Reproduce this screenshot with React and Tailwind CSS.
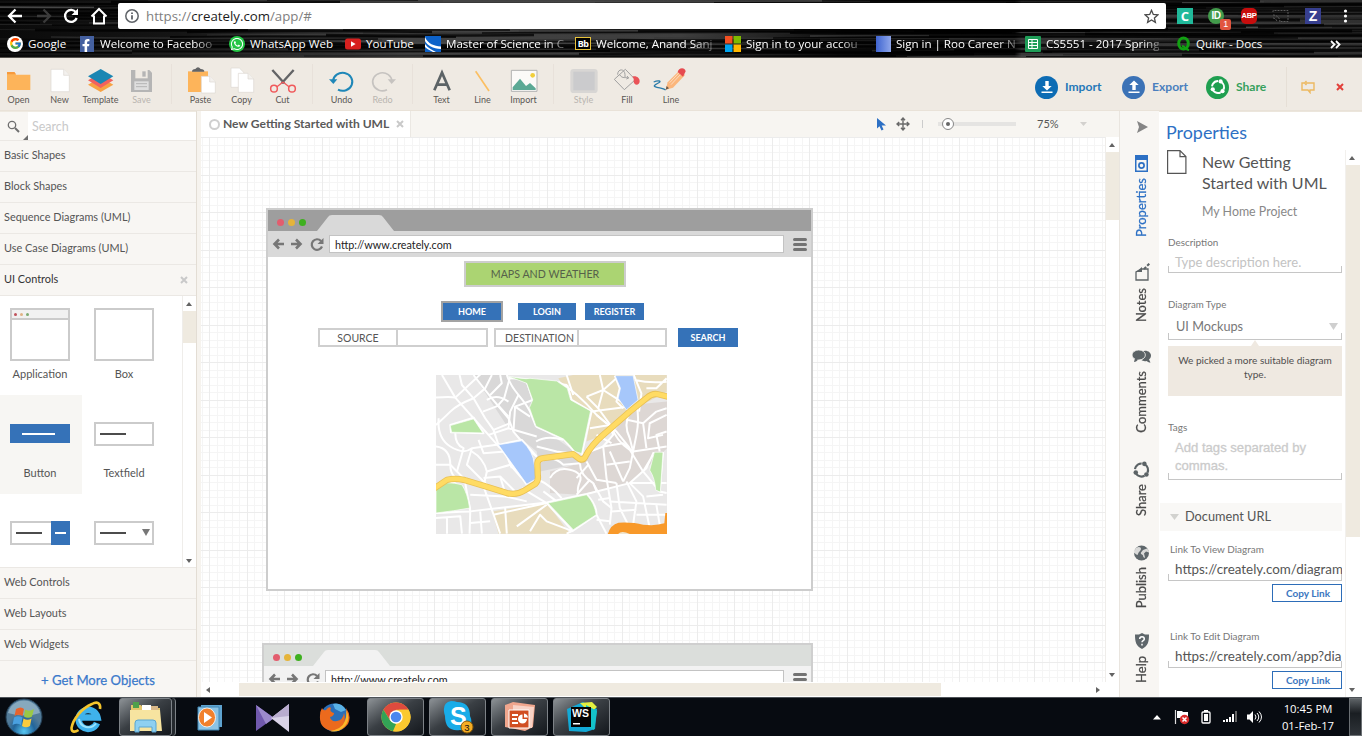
import React from "react";
import { FcGoogle } from "react-icons/fc";
import { FaFacebookF, FaWhatsapp } from "react-icons/fa";

/* ---------- Browser chrome ---------- */

const streaks = Array.from({ length: 90 }, (_, i) => {
  const a = (i * 7919) % 1362;
  const b = (i * 104729) % 58;
  const len = 140 + ((i * 613) % 400);
  const shade = 20 + ((i * 37) % 60);
  return { x: a - 160, y: b, len, h: 0.6 + ((i * 31) % 16) / 10, shade, tilt: ((i * 13) % 5) - 2 };
});

function Streaks() {
  return (
    <svg className="absolute inset-0 h-full w-full" viewBox="0 0 1362 58" preserveAspectRatio="none">
      <defs>
        <linearGradient id="st" x1="0" x2="1">
          <stop offset="0" stopColor="#0a0a0a" />
          <stop offset=".13" stopColor="#151515" />
          <stop offset=".3" stopColor="#424242" />
          <stop offset=".5" stopColor="#3e3e3e" />
          <stop offset=".62" stopColor="#0c0c0c" />
          <stop offset=".745" stopColor="#040404" />
          <stop offset=".75" stopColor="#383838" />
          <stop offset="1" stopColor="#303030" />
        </linearGradient>
      </defs>
      <rect width="1362" height="58" fill="url(#st)" />
      {streaks.map((s, i) => (
        <path
          key={i}
          d={`M${s.x} ${s.y} q${s.len / 2} ${s.tilt} ${s.len} 0`}
          stroke={`rgb(${s.shade},${s.shade},${s.shade})`}
          strokeWidth={s.h}
          fill="none"
          opacity={i % 3 ? 0.55 : 0.9}
        />
      ))}
      {streaks.map((s, i) => (
        <path key={i} d={`M${s.x + 60} ${(s.y + 23) % 58} q${s.len / 2} ${s.tilt} ${s.len} 0`} stroke="#000" strokeWidth={s.h + 0.8} fill="none" opacity=".75" />
      ))}
      <path d="M0 57.5H1362" stroke="#55524e" />
    </svg>
  );
}

const bookmarks = [
  { w: "w-[72px]", label: "Google", icon: <span className="flex size-4 items-center justify-center rounded-full bg-white"><FcGoogle size={13} /></span> },
  { w: "w-[150px]", label: "Welcome to Faceboo", fade: true, icon: <span className="flex h-4 w-[14px] items-end justify-end bg-[#4460a0] pr-[2px] text-white"><FaFacebookF size={13} /></span> },
  { w: "w-[116px]", label: "WhatsApp Web", icon: <span className="flex size-4 items-center justify-center rounded-full bg-[#25c546] text-white"><FaWhatsapp size={14} /></span> },
  { w: "w-[80px]", label: "YouTube", icon: <svg width="16" height="16"><rect y="2.5" width="16" height="11" rx="2.5" fill="#d7201f" /><path d="M6 5.3v5.4l4.6-2.7z" fill="#fff" /></svg> },
  { w: "w-[150px]", label: "Master of Science in C", fade: true, icon: <svg width="16" height="16"><rect width="16" height="16" fill="#0d62c9" /><path d="M0 1C3 8 9 10 16 10.500V13C8 13 2 9 0 5zM0 8c3 4 7 6 11 8H8C4 14 1 12 0 11z" fill="#fff" /></svg> },
  { w: "w-[150px]", label: "Welcome, Anand Sanj", fade: true, icon: <span className="flex h-[13px] w-4 items-center justify-center border border-[#e8c33a] bg-black font-['Noto_Sans'] text-[9px] font-bold leading-none tracking-[-0.5px] text-white">Bb</span> },
  { w: "w-[150px]", label: "Sign in to your accou", fade: true, icon: <svg width="16" height="16"><path fill="#f25022" d="M0 0h7.500v7.500H0z" /><path fill="#7fba00" d="M8.500 0H16v7.500H8.500z" /><path fill="#00a4ef" d="M0 8.500h7.500V16H0z" /><path fill="#ffb900" d="M8.500 8.500H16V16H8.500z" /></svg> },
  { w: "w-[150px]", label: "Sign in | Roo Career N", fade: true, icon: <span className="h-4 w-[15px] bg-linear-to-r from-[#3f63cf] to-[#8fa6ea]" /> },
  { w: "w-[150px]", label: "CS5551 - 2017 Spring", fade: true, icon: <svg width="16" height="16"><rect width="16" height="16" rx="1" fill="#1f9d58" /><path d="M3.500 3.500h9v9h-9zM3.500 6.500h9M3.500 9.500h9M7 3.500v9" stroke="#fff" fill="none" /></svg> },
  { w: "w-[110px]", label: "Quikr - Docs", icon: <svg width="16" height="16"><ellipse cx="8.500" cy="7.500" rx="4.800" ry="5.500" fill="none" stroke="#12a012" strokeWidth="3" /><path d="M7 10c3 0 4 4 7 4" fill="none" stroke="#12a012" strokeWidth="2.200" /></svg> },
];

function BrowserChrome() {
  return (
    <header className="relative h-[58px] shrink-0 overflow-hidden bg-black font-['Open_Sans','Noto_Sans',sans-serif] text-white">
      <Streaks />
      <div className="relative flex h-[30px] items-center pt-[2px]">
        <svg width="118" height="30" fill="none" stroke="#fff" strokeWidth="2.300">
          <path d="M22 15H9.500M15.500 8.500L9 15l6.500 6.500" />
          <path d="M37 15h12.500M43.500 8.500L50 15l-6.500 6.500" stroke="#3b3b3b" />
          <path d="M76 11.500A6 6 0 1 0 76.700 17" />
          <path d="M78 7.500v6.500h-6.500z" fill="#fff" stroke="none" />
          <path d="M91.500 15.500L99 8l7.500 7.500M94 14.500V22.500h10V14.500" strokeWidth="2" />
        </svg>
        <div className="flex h-[26px] w-[1048px] items-center rounded-[2px] bg-white pl-[7px] pr-[7px]">
          <svg width="14" height="14" fill="none" stroke="#5f6368" strokeWidth="1.500"><circle cx="7" cy="7" r="6.200" /><path d="M7 6.200v4.200M7 3.500v1.500" strokeWidth="1.800" /></svg>
          <span className="ml-[7px] flex-1 text-[13.25px] leading-5 text-[#808080]">https://<span className="text-[#1c1c1c]">creately.com</span>/app/#</span>
          <svg width="15" height="15" fill="none" stroke="#4a4a4a" strokeWidth="1.300"><path d="M7.500 1.300l1.800 4.200 4.500.4-3.400 3 1 4.400-3.900-2.300-3.900 2.300 1-4.400-3.400-3 4.500-.4z" /></svg>
        </div>
        <div className="flex items-center pl-[11px]">
          <span className="flex size-4 items-center justify-center bg-[#20b99a] text-[13px] font-bold leading-none">C</span>
          <span className="relative ml-[15px] flex size-4 items-center justify-center rounded-full bg-[#429b4b] font-['Liberation_Sans'] text-[10px] font-bold leading-none tracking-[-0.5px]">
            ID
            <span className="absolute left-3 top-[11px] flex h-[11px] w-[11px] items-center justify-center rounded-[2px] bg-[#e1553f] text-[9px] font-normal">1</span>
          </span>
          <span className="ml-[17px] flex size-4 items-center justify-center rounded-[5px] bg-[#c70d0d] font-['Liberation_Sans'] text-[7.500px] font-bold leading-none tracking-[-0.3px]">ABP</span>
          <svg className="ml-[15px]" width="17" height="16" fill="none" stroke="#5b5b5b"><path d="M1 4V2.500h15v11H9M1 7c4 0 7 3 7 7M1 10c2 0 4 2 4 4" strokeDasharray="2 1" /></svg>
          <span className="ml-[16px] flex size-4 items-center justify-center bg-[#373f8f] font-['Liberation_Sans'] text-[14px] font-bold leading-none">Z</span>
          <svg className="ml-[22px]" width="5" height="16" fill="#fff"><circle cx="2.500" cy="3" r="1.600" /><circle cx="2.500" cy="8" r="1.600" /><circle cx="2.500" cy="13" r="1.600" /></svg>
        </div>
      </div>
      <div className="relative flex h-[28px] items-center pl-[7px] text-[11.65px]">
        {bookmarks.map((b) => (
          <div key={b.label} className={`${b.w} flex shrink-0 items-center gap-[5px]`}>
            <span className="flex w-4 shrink-0 justify-center">{b.icon}</span>
            <span className={b.fade ? "whitespace-nowrap tracking-[-0.05px] [mask-image:linear-gradient(to_right,#000_84%,#0005)]" : "whitespace-nowrap"}>{b.label}</span>
          </div>
        ))}
        <svg className="ml-[45px]" width="11" height="9" fill="none" stroke="#fff" strokeWidth="1.800"><path d="M1 1l3.500 3.500L1 8M6 1l3.500 3.500L6 8" /></svg>
      </div>
    </header>
  );
}

/* ---------- Application toolbar ---------- */

function Tool({ label, w = "w-[41px]", muted, children }) {
  return (
    <div className={`${w} flex shrink-0 flex-col items-center`}>
      <svg width="40" height="31" viewBox="0 0 120 93">{children}</svg>
      <span className={`-mt-px text-[9px] leading-[11px] ${muted ? "text-[#b9b5b0]" : "text-[#5a5754]"}`}>{label}</span>
    </div>
  );
}

const Sep = () => <div className="h-10 w-[18px] shrink-0 border-r border-[#e8e1da] -translate-x-2" />;

function RoundAction({ label, bg, text, children, textW }) {
  return (
    <div className="flex items-center gap-[7px]">
      <span className={`flex size-[23px] items-center justify-center rounded-full ${bg}`}>{children}</span>
      <span className={`text-[12.1px] font-bold leading-4 ${text} ${textW}`}>{label}</span>
    </div>
  );
}

const recycle = (
  <>
    <circle cx="12" cy="12" r="8" fill="none" stroke="currentColor" strokeWidth="2.600" strokeDasharray="11.500 5.250" transform="rotate(-60 12 12)" />
    <circle cx="5" cy="15" r="2.800" fill="currentColor" />
    <circle cx="18" cy="17.500" r="2.800" fill="currentColor" />
    <circle cx="15.500" cy="4.500" r="2.800" fill="currentColor" />
  </>
);

function AppToolbar() {
  return (
    <div className="flex h-[53px] shrink-0 items-start border-b border-[#e9e2d8] bg-[#efeae3] pt-[6px]">
      <div className="-ml-[2px] flex">
        <Tool label="Open"><path d="M24 24h22l5 8h43v46H24z" fill="#fdb45a" /><path d="M24 24h22l5 7H24z" fill="#f79a3c" /></Tool>
        <Tool label="New"><path d="M33 16h38l17 18v49H33z" fill="#fff" stroke="#ddd8d2" strokeWidth="2" /><path d="M71 16v18h17" fill="#f3f1ee" stroke="#ddd8d2" strokeWidth="2" /></Tool>
        <Tool label="Template"><path d="M21 62l38-22 38 22-38 22z" fill="#f7a243" /><path d="M21 49l38-22 38 22-38 23z" fill="#f2615e" /><path d="M21 37l38-22 38 22-38 23z" fill="#1b86b3" /></Tool>
        <Tool label="Save" muted><path d="M27 18h55l8 8v58H27z" fill="#b5b5b5" /><path d="M40 18h37v25H40z" fill="#efeae3" /><path d="M61 22h10v16H61z" fill="#b5b5b5" /><path d="M37 52h43v26H37z" fill="#dedede" /><path d="M42 59h33M42 68h33" stroke="#b5b5b5" strokeWidth="3" /></Tool>
        <Sep />
        <Tool label="Paste"><path d="M21 22h60v62H21z" fill="#fdb45a" /><path d="M33 23q0-8 10-8 8-11 16 0 11 0 11 8z" fill="#636466" /><path d="M61 37h25l17 17v33H61z" fill="#fff" stroke="#ddd8d2" strokeWidth="2" /><path d="M86 37v17h17" fill="#f3f1ee" stroke="#ddd8d2" strokeWidth="2" /></Tool>
        <Tool label="Copy"><path d="M27 12h25l14 14v44H27z" fill="#fff" stroke="#ddd8d2" strokeWidth="2" /><path d="M49 28h29l17 17v40H49z" fill="#fff" stroke="#ddd8d2" strokeWidth="2" /><path d="M78 28v17h17" fill="#f3f1ee" stroke="#ddd8d2" strokeWidth="2" /></Tool>
        <Tool label="Cut"><path d="M28 18l36 40M92 18L56 58" stroke="#636466" strokeWidth="7" /><path d="M60 54L42 68M60 54l18 14" stroke="#f0595b" strokeWidth="4" /><circle cx="33" cy="74" r="10" fill="none" stroke="#f0595b" strokeWidth="4.500" /><circle cx="87" cy="74" r="10" fill="none" stroke="#f0595b" strokeWidth="4.500" /></Tool>
        <Sep />
        <Tool label="Undo"><path d="M33 52A29 27 0 1 1 48 77" fill="none" stroke="#1f87b8" strokeWidth="6" /><path d="M21 46h25L34 60z" fill="#1f87b8" /></Tool>
        <Tool label="Redo" muted><path d="M87 52A29 27 0 1 0 72 77" fill="none" stroke="#c6c3c0" strokeWidth="5" /><path d="M99 46H74l12 14z" fill="#c6c3c0" /></Tool>
        <Sep />
        <Tool label="Text"><path d="M37 79L60 26l23 53M45 62h30" fill="none" stroke="#5c6366" strokeWidth="8" /></Tool>
        <Tool label="Line"><path d="M38 22l40 59" stroke="#fbbf62" strokeWidth="5" /></Tool>
        <Tool label="Import"><path d="M22 19h77v63H22z" fill="#fbfaf8" stroke="#b1b1b1" strokeWidth="3" /><path d="M26 78V70l22-26 18 22 12-9 17 16v5z" fill="#5ba995" /><circle cx="86" cy="34" r="7" fill="#f1cf3b" /></Tool>
        <Sep />
        <Tool label="Style" w="w-[43px]" muted><rect x="19" y="15" width="82" height="72" rx="10" fill="#d8d6d4" /><rect x="28" y="23" width="64" height="56" fill="#cbcbcd" /></Tool>
        <Tool label="Fill" w="w-[44px]"><path d="M22 46l33-30 30 31-33 30z" fill="none" stroke="#a0a0a0" strokeWidth="3" /><path d="M32 32c0-20 22-18 22 0v8" fill="none" stroke="#a0a0a0" strokeWidth="3" /><path d="M38 32c8 14 20 6 26 10M60 36l5 6-7 3" fill="none" stroke="#a0a0a0" strokeWidth="3" /><path d="M76 38c12-4 22 4 22 14 0 14-18 14-18 0 0-6 2-8-4-14z" fill="#ea5358" /></Tool>
        <Tool label="Line" w="w-[44px]"><path d="M8 54c14-6 26-3 14 3s-18 10-4 13 20 3 26 8" fill="none" stroke="#2a7ba9" strokeWidth="4" /><path d="M44 77l6-22 36-36 16 14-36 38z" fill="#fbb67c" /><path d="M44 77l3-11 7 7z" fill="#6a5a4a" /><path d="M60 62l32-34M56 56l32-34" stroke="#fddcc0" strokeWidth="3" /><path d="M80 24c2-14 22-16 24-2l-8 16z" fill="#e64b50" /></Tool>
      </div>
      <div className="ml-[342px] flex h-[46px] shrink-0 items-center">
        <RoundAction label="Import" bg="bg-[#0d6cb4]" text="text-[#2578b8]" textW="w-[57px]">
          <svg width="16" height="16" fill="#fff"><path d="M6.300 2h3.400v5h3L8 11.500 3.300 7h3zM2.500 12.500h11V14h-11z" /></svg>
        </RoundAction>
        <RoundAction label="Export" bg="bg-[#3b72b6]" text="text-[#4a7fbe]" textW="w-[47px]">
          <svg width="16" height="16" fill="#fff"><path d="M6.300 11h3.400V6h3L8 1.500 3.300 6h3zM2.500 12.500h11V14h-11z" /></svg>
        </RoundAction>
        <div className="ml-[7px]">
          <RoundAction label="Share" bg="bg-[#1f9f50] text-white" text="text-[#35a05c]" textW="w-[50px]">
            <svg width="18" height="18" viewBox="0 0 24 24">{recycle}</svg>
          </RoundAction>
        </div>
        <div className="h-10 border-l border-[#e6dfd6]" />
        <svg className="ml-[13px]" width="16" height="14" fill="none" stroke="#edb961" strokeWidth="1.400"><path d="M4 3H2v7h6l2 2.500V10h4V3H6M6.500 1L4.500 3l2 2" /></svg>
        <svg className="ml-[20px]" width="8" height="8" stroke="#e2403a" strokeWidth="2"><path d="M1 1l6 6M7 1L1 7" /></svg>
      </div>
    </div>
  );
}

/* ---------- Object library ---------- */

const Row = ({ children, close }) => (
  <div className="flex h-[31px] shrink-0 items-center justify-between border-b border-[#ebe8e4] bg-[#f8f6f3] pb-[2px] pl-1 pr-2 text-[10.9px] text-[#555]">
    <span className={close ? "text-[#333]" : ""}>{children}</span>
    {close && <svg className="mt-[2px]" width="8" height="8" stroke="#c9c9c9" strokeWidth="2"><path d="M1 1l6 6M7 1L1 7" /></svg>}
  </div>
);

const Up = () => <svg width="7" height="4" fill="#636363"><path d="M0 4h6L3 0z" /></svg>;
const Down = () => <svg width="7" height="4" fill="#636363"><path d="M0 0h6L3 4z" /></svg>;

function Shape({ label, active, first, children }) {
  return (
    <div className={`flex h-[99px] flex-col items-center ${first ? "pr-[2px]" : ""} ${active ? "bg-[#f7f6f3]" : ""}`}>
      <div className="flex h-[77px] w-[60px] items-center">{children}</div>
      {label && <span className="-mt-[7px] text-[11px] leading-4 text-[#555]">{label}</span>}
    </div>
  );
}

function Library() {
  return (
    <aside className="flex w-[196px] shrink-0 flex-col font-['Lato',sans-serif]">
      <div className="flex h-[30px] shrink-0 border-b border-[#ebe8e4] border-t border-t-[#eee9e0] bg-white">
        <div className="flex w-7 items-center bg-[#f8f6f3] pl-[7px]">
          <svg width="21" height="28" fill="none" stroke="#6f6f6f"><circle cx="5" cy="13" r="3.700" strokeWidth="1.300" /><path d="M8 16l4 4" strokeWidth="2" /><path d="M21 23v5h-5z" fill="#6f6f6f" stroke="none" /></svg>
        </div>
        <span className="pl-1 pt-px text-[12.5px] leading-[28px] text-[#c9c9c9]">Search</span>
      </div>
      <Row>Basic Shapes</Row>
      <Row>Block Shapes</Row>
      <Row>Sequence Diagrams (UML)</Row>
      <Row>Use Case Diagrams (UML)</Row>
      <Row close>UI Controls</Row>
      <div className="flex h-[271px] shrink-0 overflow-hidden bg-white">
        <div className="grid w-[182px] grid-cols-[82px_84px] content-start">
          <Shape first label="Application">
            <div className="h-[53px] w-[60px] border-2 border-[#cbcbcb]">
              <div className="flex h-[10px] items-center gap-[3px] border-b-2 border-[#cbcbcb] bg-[#f1f1f1] pl-[2px]">
                <i className="size-[3px] rounded-full bg-[#c0525c]" /><i className="size-[3px] rounded-full bg-[#e0b285]" /><i className="size-[3px] rounded-full bg-[#7cab72]" />
              </div>
            </div>
          </Shape>
          <Shape label="Box"><div className="h-[53px] w-[60px] border-2 border-[#cbcbcb]" /></Shape>
          <Shape first label="Button" active><div className="flex h-[19px] w-[60px] items-center bg-[#3572b8] pl-3"><div className="h-[2px] w-[33px] bg-white" /></div></Shape>
          <Shape label="Textfield"><div className="flex h-6 w-[60px] items-center border-2 border-[#cbcbcb] pl-1"><div className="h-[2px] w-[26px] bg-[#4c4c4c]" /></div></Shape>
          <Shape first><div className="flex h-6 w-[60px] items-stretch"><div className="flex w-[41px] items-center border-2 border-r-0 border-[#cbcbcb] pl-1"><div className="h-[2px] w-[26px] bg-[#4c4c4c]" /></div><div className="flex w-[19px] items-center justify-center bg-[#3572b8]"><div className="h-[2px] w-[11px] bg-white" /></div></div></Shape>
          <Shape><div className="flex h-6 w-[60px] items-center justify-between border-2 border-[#cbcbcb] pl-1 pr-[2px]"><div className="h-[2px] w-[26px] bg-[#4c4c4c]" /><svg width="8" height="7" fill="#777"><path d="M0 0h8L4 7z" /></svg></div></Shape>
        </div>
        <div className="flex w-[14px] flex-col items-center border-l border-[#efedea]">
          <div className="flex h-[15px] items-center"><Up /></div>
          <div className="h-8 w-[13px] bg-[#efeae0]" />
          <div className="mt-auto flex h-[13px] items-center"><Down /></div>
        </div>
      </div>
      <div className="border-t border-[#ebe8e4]" />
      <Row>Web Controls</Row>
      <Row>Web Layouts</Row>
      <Row>Web Widgets</Row>
      <div className="flex flex-1 items-center justify-center bg-[#f8f6f3] pt-[3px] text-[13.1px] text-[#3a79cb] [-webkit-text-stroke:0.25px]">+ Get More Objects</div>
    </aside>
  );
}

/* ---------- Canvas ---------- */

function Grid() {
  const xs = [], ys = [];
  for (let i = 0; i < 125; i++) xs.push([Math.round(8.3 - 7.5 + i * 7.5), i % 5 === 1]);
  for (let i = 0; i < 75; i++) ys.push([Math.round(i * 7.5), i % 5 === 0]);
  return (
    <svg className="absolute inset-0" width="904" height="545" shapeRendering="crispEdges">
      {xs.filter((x) => !x[1]).map(([x]) => <path key={x} d={`M${x + 0.5} 0V545`} stroke="#f5f5f5" />)}
      {ys.filter((y) => !y[1]).map(([y]) => <path key={y} d={`M0 ${y + 0.5}H904`} stroke="#f5f5f5" />)}
      {xs.filter((x) => x[1]).map(([x]) => <path key={x} d={`M${x + 0.5} 0V545`} stroke="#ececec" />)}
      {ys.filter((y) => y[1]).map(([y]) => <path key={y} d={`M0 ${y + 0.5}H904`} stroke="#ececec" />)}
    </svg>
  );
}

function MockBrowser({ box, light, children }) {
  return (
    <div className={`absolute flex flex-col border-2 bg-white ${box} ${light ? "border-[#cfcfcf]" : "border-[#cdcdcd]"}`}>
      <div className={`flex h-[21px] shrink-0 items-end ${light ? "bg-[#dbdedb]" : "bg-[#9e9e9e]"}`}>
        <div className="flex h-[21px] w-[49px] items-center gap-[4px] pl-[9px] pt-[4px]">
          <i className="size-[7px] rounded-full bg-[#e35d6e]" /><i className="size-[7px] rounded-full bg-[#e5b43a]" /><i className="size-[7px] rounded-full bg-[#3eb01f]" />
        </div>
        <svg width="79" height="16" className={light ? "fill-[#f2f2f2]" : "fill-[#d9d9d9]"}><path d="M0 16L11 2q1-2 4-2h47q3 0 4 2l11 14z" /></svg>
      </div>
      <div className={`flex h-[26px] shrink-0 items-center pl-[4px] ${light ? "bg-[#f2f2f2]" : "bg-[#d9d9d9]"}`}>
        <svg width="57" height="18" fill="none" stroke="#767676" strokeWidth="2.600">
          <path d="M12 9H3M7 4.500L2.500 9 7 13.500M19 9h9M24 4.500L28.500 9 24 13.500" />
          <path d="M49 6A5.300 5.300 0 1 0 50 11.500" strokeWidth="2.200" /><path d="M51.500 3v6h-6z" fill="#767676" stroke="none" />
        </svg>
        <div className="flex h-[18px] flex-1 items-center border border-[#c3c3c3] bg-white pl-[5px] pt-[2px] text-[10.78px] leading-none text-[#222]">http://www.creately.com</div>
        <div className="ml-[9px] mr-[4px] flex w-[14px] flex-col gap-[2px]">
          <i className="h-[3px] rounded-full bg-[#737373]" /><i className="h-[3px] rounded-full bg-[#737373]" /><i className="h-[3px] rounded-full bg-[#737373]" />
        </div>
      </div>
      {children}
    </div>
  );
}

const streets = [
  "M17 88Q60 84 75 88L170 0", "M35 20L75 88 130 150 175 200 210 240", "M88 20L95 50 130 90 165 150 190 185 240 165",
  "M130 20Q160 60 185 90T235 150L250 190 300 250 320 265", "M185 20L165 60 130 90", "M230 20Q240 50 265 80T300 130L318 175",
  "M235 30Q290 30 330 38T412 50", "M412 50L425 95 485 130 455 260", "M290 40L308 95 255 115 300 145", "M240 25L222 90 205 110",
  "M210 20L215 45 180 80", "M265 80L240 130 235 180 320 205", "M170 95Q200 75 235 100", "M158 130L205 112 235 145", "M60 170L130 148 160 195 62 192Z",
  "M17 170Q40 150 60 130T130 90", "M25 150Q20 210 60 235T125 240L210 228", "M17 235Q60 240 60 290T110 330", "M75 195Q75 230 100 240L80 310 100 330",
  "M125 240L110 290 170 350", "M125 250Q160 270 170 310L160 355", "M145 215L160 255 225 250 245 300", "M170 310L240 290 275 330", "M205 230L290 350",
  "M160 330L210 325 255 370", "M210 325L225 375", "M17 290L60 290 80 310", "M175 200L235 180", "M190 185L205 230 275 215 320 265",
  "M255 115L250 190", "M318 175L400 212 435 252", "M318 220Q350 200 400 215", "M320 235L380 250 440 258", "M330 280Q370 260 400 290L450 285",
  "M360 330Q380 295 420 305T450 340 445 375", "M325 335Q360 350 395 390", "M275 360L350 405 430 490", "M17 435Q60 432 120 430L350 403 470 378 600 345 711 345",
  "M105 345L120 430 118 497", "M60 340Q110 355 120 425", "M17 450L90 445 95 497M50 450V497M150 430L155 497M120 465L180 460", "M120 380L225 385 290 400M160 355L185 425 210 497", "M190 440L350 405",
  "M225 420L230 497M260 475L350 410M300 490L330 440 350 460 430 490", "M380 400L340 370M470 378Q500 410 500 440L530 497", "M500 440L430 487 410 497M500 455L540 460",
  "M450 285Q450 320 490 345L500 370M470 280L500 335 560 345", "M480 335L440 380M455 260L520 235 580 225 610 250 600 300 580 340", "M520 235L530 330 545 420 540 470",
  "M385 40Q440 70 500 140L560 190 600 240", "M430 80L410 20M500 140L530 165M470 85L505 120 545 175", "M505 120L520 65 510 20M520 65L560 30M470 85L520 65 575 100 600 130",
  "M555 22L570 60 560 100 580 120M612 20L635 75 628 130M615 35Q660 45 711 40M650 60L680 60 711 30", "M480 180L540 170 550 200 520 235M485 130L600 115M500 200L545 225",
  "M545 175Q560 220 600 245L640 310 690 370", "M600 130Q580 170 600 210L610 250 711 235", "M620 110Q630 150 620 200L610 250M595 155L640 165 680 130M640 165L650 240M680 130L711 120M711 140L660 165 655 210 700 200",
  "M711 190L680 200 690 250M672 252L650 300 600 345M700 252L690 370 711 375M640 310L670 260", "M560 345L570 420 600 480M590 340L620 400 610 470M540 400L711 410M600 345L640 385 660 480M650 385L700 380M545 430L620 425M620 440L711 440M680 410L690 470",
  "M490 345L520 400 545 420M505 395L540 390M530 290L600 280M540 250L580 340M475 290L440 330",
];

function MapPicture() {
  return (
    <svg width="231" height="159" viewBox="17 20 695 478" preserveAspectRatio="none" className="absolute left-[235px] top-[238px]">
      <rect x="17" y="20" width="695" height="478" fill="#e9e8e8" />
      <path d="M130 20L230 20 290 45 310 100 320 170 435 250 450 285 330 310 320 250 235 180Z" fill="#d9d8d8" />
      <path d="M455 260L530 235 600 110 712 100V240L640 310 600 345 450 380 360 375V310L450 285z" fill="#ddd7d4" />
      <path d="M385 30L430 20H711V70L600 130 520 200 470 220 485 130 425 95z" fill="#e8dcbd" />
      <path d="M185 430L350 405 420 497H205z" fill="#e8dcbd" />
      <g fill="none" stroke="#fff" strokeWidth="6" strokeLinejoin="round">{streets.map((d) => <path key={d} d={d} />)}</g>
      <g fill="#bae6a6" stroke="#fff" strokeWidth="2">
        <path d="M230 22Q280 34 300 30L380 38 412 60 422 95 482 128 455 256 435 250Q420 230 400 212L318 174 298 118 308 95 290 45z" />
        <path d="M60 172L130 152 158 194 64 192Z" /><path d="M17 350Q50 338 95 350 112 375 118 420L70 428 17 435z" />
        <path d="M354 405L470 380Q494 405 499 440L430 485z" /><path d="M674 252h26l-8 120-14-6q-2-35-18-60z" />
      </g>
      <path d="M205 230L275 218Q310 250 313 290L322 330 290 348zM556 22H610L625 95 590 125 565 90 572 60z" fill="#a6c7fb" stroke="#fff" strokeWidth="2" />
      <g fill="none" strokeLinejoin="round">
        {["#e9c155", "#ffdb63"].map((c, i) => (
          <path key={c} stroke={c} strokeWidth={i ? 14 : 19} d="M10 362L50 335Q75 330 100 335L160 353 230 375Q260 382 285 366L316 347Q326 337 323 320L322 285Q323 272 340 270L430 258 450 273Q462 277 468 262 485 230 520 200L600 130 650 90Q668 74 685 78L715 85" />
        ))}
      </g>
      <path d="M534 498Q542 470 566 464 610 462 640 470 680 474 704 466L707 435H712V498z" fill="#f8992a" />
      <path d="M565 498q10-12 35 0" fill="#efe5d0" />
    </svg>
  );
}

const Btn = ({ at, children }) => (
  <div className={`absolute flex items-center justify-center bg-[#3572b8] text-[9.05px] font-bold leading-none text-white ${at}`}>{children}</div>
);
const Field = ({ at, children }) => (
  <div className={`absolute flex h-[19px] items-center justify-center border-2 border-[#cfcfcf] bg-white pt-px text-[10.5px] leading-none text-[#555] ${at}`}>{children}</div>
);

function Canvas() {
  return (
    <main className="flex w-[918px] shrink-0 flex-col font-['Lato',sans-serif]">
      <div className="flex h-[26px] shrink-0 bg-[#f7f5f1]">
        <div className="flex w-[210px] items-center border-r border-[#ebe8e3] bg-white pl-[8px]">
          <span className="size-[11px] rounded-full border-2 border-[#cfcfcf]" />
          <span className="ml-[3px] w-[173px] whitespace-nowrap text-[12.08px] font-bold text-[#5a5a5a]">New Getting Started with UML</span>
          <svg width="8" height="8" stroke="#c9c9c9" strokeWidth="2"><path d="M1 1l6 6M7 1L1 7" /></svg>
        </div>
        <div className="flex items-center pl-[465px]">
          <svg width="11" height="14" fill="#2d70c4"><path d="M1 1v10.500l2.500-2.300 2 4.300 2-1-1.800-4H10z" /></svg>
          <svg className="ml-[9px]" width="14" height="14" fill="none" stroke="#6a6a6a" strokeWidth="1.400"><path d="M7 1.500v11M1.500 7h11M5 3.200L7 1l2 2.200M5 10.800L7 13l2-2.200M3.200 5L1 7l2.200 2M10.800 5L13 7l-2.200 2" /></svg>
          <div className="ml-[12px] h-2 border-l border-[#ccc]" />
          <div className="relative ml-[15px] h-1 w-[78px] bg-[#e5e4e2]">
            <span className="absolute left-[4px] top-[-4px] flex size-3 items-center justify-center rounded-full border border-[#888] bg-white"><i className="size-1 rounded-full bg-[#666]" /></span>
          </div>
          <span className="ml-[21px] w-[43px] text-[11px] text-[#555]">75%</span>
          <svg width="7" height="4" fill="#d3d1ce"><path d="M0 0h7L3.500 4z" /></svg>
        </div>
      </div>
      <div className="flex h-[545px] shrink-0">
        <div className="relative w-[904px] overflow-hidden bg-white">
          <Grid />
          <MockBrowser box="left-[65px] top-[71px] h-[383px] w-[547px]" />
          <div className="absolute left-[263px] top-[124px] flex h-[26px] w-[162px] items-center justify-center border-2 border-[#cdcdcd] bg-[#abd472] text-[10.65px] leading-none text-[#56614a]">MAPS AND WEATHER</div>
          <Btn at="left-[240px] top-[164px] h-[21px] w-[62px] border-2 border-[#a3a3a3]">HOME</Btn>
          <Btn at="left-[317px] top-[166px] h-[17px] w-[58px]">LOGIN</Btn>
          <Btn at="left-[384px] top-[166px] h-[17px] w-[59px]">REGISTER</Btn>
          <Btn at="left-[477px] top-[191px] h-[19px] w-[60px]">SEARCH</Btn>
          <Field at="left-[117px] top-[191px] w-[80px]">SOURCE</Field>
          <Field at="left-[195px] top-[191px] w-[92px]" />
          <Field at="left-[293px] top-[191px] w-[85px] pl-[6px]">DESTINATION</Field>
          <Field at="left-[376px] top-[191px] w-[90px]" />
          <MapPicture />
          <MockBrowser light box="left-[61px] top-[506px] h-[300px] w-[551px]" />
        </div>
        <div className="flex w-[14px] flex-col items-center border-l border-[#efedea] bg-white">
          <div className="flex h-[15px] items-center"><Up /></div>
          <div className="h-[68px] w-[13px] bg-[#efeae0]" />
          <div className="mt-auto flex h-[14px] items-center"><Down /></div>
        </div>
      </div>
      <div className="flex h-[15px] items-center bg-white">
        <svg className="ml-[5px]" width="4" height="6" fill="#636363"><path d="M4 0v6L0 3z" /></svg>
        <div className="ml-[29px] h-[13px] w-[702px] bg-[#efeae0]" />
        <svg className="ml-[155px]" width="4" height="6" fill="#636363"><path d="M0 0v6l4-3z" /></svg>
      </div>
    </main>
  );
}

/* ---------- Right side ---------- */

function VTab({ label, h, gap, active, children }) {
  return (
    <div className={`flex shrink-0 flex-col items-center ${h} ${gap} ${active ? "text-[#2d70c4]" : "text-[#5c6366]"}`}>
      {children}
      <span className={`-ml-[2px] rotate-180 whitespace-nowrap text-[13px] leading-[18px] [-webkit-text-stroke:0.25px] [writing-mode:vertical-rl] ${active ? "" : "text-[#4a4a4a]"}`}>{label}</span>
    </div>
  );
}

function TabRail() {
  return (
    <nav className="flex w-[40px] shrink-0 flex-col items-center border-l border-[#e9e5df] bg-[#f8f6f3] pl-[4px] pt-[10px] font-['Lato',sans-serif]">
      <svg className="shrink-0" width="12" height="12" fill="#858585"><path d="M1 0l11 6-11 6 2-6z" /></svg>
      <div className="h-[22px] shrink-0" />
      <VTab label="Properties" h="h-[108px]" gap="gap-[6px]" active>
        <svg width="13" height="17" fill="none" stroke="currentColor"><path d="M.75.75h11.500v15.500H.75z" strokeWidth="1.500" /><path d="M0 0h13v5H0z" fill="currentColor" stroke="none" /><circle cx="6.500" cy="10.500" r="2.600" strokeWidth="1.700" /></svg>
      </VTab>
      <VTab label="Notes" h="h-[87px]" gap="gap-[7px]">
        <svg className="ml-[2px]" width="16" height="18" fill="none" stroke="currentColor" strokeWidth="1.300"><path d="M7 6h6v11H1V9z" /><path d="M1 9l6-5v5z" fill="currentColor" stroke="none" /><path d="M9 6l6-6" strokeDasharray="3 1.500" strokeWidth="2" /></svg>
      </VTab>
      <VTab label="Comments" h="h-[111px]" gap="gap-[8px]">
        <svg width="19" height="13" fill="currentColor"><path d="M10 1.500c5-2 9 1 9 4 0 2-1 3-2 4l1.500 3c-2 0-3-.7-4-1.500-2 .5-4 0-5-1 4-1.500 4-6 .5-8.500z" /><ellipse cx="6.700" cy="5" rx="6.700" ry="5" stroke="#f8f6f3" strokeWidth=".8" /><path d="M3 8l-1 4c2 0 3-1 4-2.500z" /></svg>
      </VTab>
      <VTab label="Share" h="h-[84px]" gap="gap-[5px]">
        <svg width="19" height="18" viewBox="1 1 22 22">{recycle}</svg>
      </VTab>
      <VTab label="Publish" h="h-[88px]" gap="gap-[6px]">
        <svg width="17" height="16"><circle cx="8.500" cy="8" r="7.500" fill="#5f676b" /><path d="M3 3c3-2 5-1 5 1S5 7 5 9 3 9 1 8 2 5 3 3zM10 5l4-1.500c1.500 1 2 3 2 4l-3-1-2 2 1 4c-1 1-2-1-2-2s-3-1-2-3z" fill="#f0efec" opacity=".85" /></svg>
      </VTab>
      <VTab label="Help" h="h-[60px]" gap="gap-[7px]">
        <svg width="14" height="16" fill="#5f676b"><path d="M7 0l3 1.500h4C14 9 13 13 7 16 1 13 0 9 0 1.500h4z" /><path d="M4.700 6c0-3 4.600-3 4.600 0 0 1.700-2.300 1.500-2.300 3.300M7 10.800v1.700" stroke="#fff" strokeWidth="1.500" fill="none" /></svg>
      </VTab>
    </nav>
  );
}

const Bracket = ({ h, children }) => (
  <div className={`relative overflow-hidden whitespace-nowrap border-b border-[#c6c6c6] pl-[7px] ${h}`}>
    {children}
    <i className="absolute bottom-0 left-0 h-[6px] w-px bg-[#c6c6c6]" />
    <i className="absolute bottom-0 right-0 h-[6px] w-px bg-[#c6c6c6]" />
  </div>
);

const CopyLink = () => (
  <div className="ml-auto mt-[3px] flex h-[18px] w-[70px] items-center justify-center border border-[#2d6db8] pl-[2px] text-[10px] font-bold leading-none text-[#3a76c0]">Copy Link</div>
);

function Properties() {
  return (
    <section className="relative flex w-[203px] shrink-0 border-t border-[#ece6dc] bg-white font-['Lato',sans-serif]">
      <div className="w-[186px] pl-[9px] pr-[3px]">
        <h2 className="-ml-[2px] pt-[8px] text-[17.9px] leading-[24px] text-[#2d70c4]">Properties</h2>
        <div className="mt-[5px] flex">
          <svg className="-ml-[1px] mt-[1px] shrink-0" width="20" height="24" fill="none" stroke="#555" strokeWidth="1.200"><path d="M.6.600h12.400l5.900 6v16.800H.6zM13 .6v6h6" /></svg>
          <div className="ml-[15px] pt-[2px]">
            <p className="whitespace-nowrap text-[16px] leading-[21px] text-[#555]">New Getting<br />Started with UML</p>
            <p className="mt-[11px] text-[12.4px] leading-4 text-[#888]">My Home Project</p>
          </div>
        </div>
        <p className="mt-[15px] text-[9.9px] leading-[14px] text-[#777]">Description</p>
        <Bracket h="h-[24px]"><span className="text-[13px] leading-[24px] text-[#c3c3c3]">Type description here.</span></Bracket>
        <p className="mt-[24px] text-[9.7px] leading-[14px] text-[#777]">Diagram Type</p>
        <Bracket h="h-[29px]">
          <span className="flex items-center justify-between pl-px pr-1 text-[12.7px] leading-[30px] text-[#777]">UI Mockups<svg width="9" height="7" fill="#cfcfcf"><path d="M0 0h9L4.500 7z" /></svg></span>
        </Bracket>
        <div className="flex h-[6px] justify-center"><svg width="8" height="6" fill="#efe9e1"><path d="M4 0l4 6H0z" /></svg></div>
        <div className="h-[50px] bg-[#efe9e1] pt-[7px] text-center text-[10.05px] leading-[14px] text-[#4f4f4f]">We picked a more suitable diagram type.</div>
        <p className="mt-[24px] text-[10px] leading-[14px] text-[#777]">Tags</p>
        <Bracket h="h-[46px]"><span className="block pt-[5px] font-['Liberation_Sans'] text-[13.1px] leading-[17.500px] text-[#cbcbcb] [-webkit-text-stroke:0.3px]">Add tags separated by<br />commas.</span></Bracket>
        <div className="-ml-[8px] mt-[23px] flex h-[28px] items-center bg-[#f9f8f6] pl-[10px] text-[12.75px] text-[#555]"><svg className="mr-[6px]" width="9" height="6" fill="#d2d2cf"><path d="M0 0h9L4.500 6z" /></svg>Document URL</div>
        <p className="mt-[11px] pl-[2px] text-[9.95px] leading-[14px] text-[#777]">Link To View Diagram</p>
        <Bracket h="h-[25px]"><span className="text-[13.4px] leading-[26px] text-[#555]">https://creately.com/diagram</span></Bracket>
        <CopyLink />
        <p className="mt-[27px] pl-[2px] text-[9.95px] leading-[14px] text-[#777]">Link To Edit Diagram</p>
        <Bracket h="h-[25px]"><span className="text-[13.45px] leading-[26px] text-[#555]">https://creately.com/app?dia</span></Bracket>
        <CopyLink />
      </div>
      <div className="mt-[38px] flex w-[14px] flex-col items-center border-l border-[#f2f0ed]">
        <div className="flex h-[15px] items-center"><Up /></div>
        <div className="h-[372px] w-[14px] bg-[#efeae0]" />
        <div className="mt-auto flex h-[14px] items-center"><Down /></div>
      </div>
    </section>
  );
}

/* ---------- Taskbar ---------- */

const Glass = ({ w, children }) => (
  <div className={`${w} flex h-[38px] shrink-0 items-center justify-center rounded-[3px] border border-[#7d8287] bg-linear-to-br from-[#8d9296] via-[#3a3f44] via-45% to-[#14181d]`}>{children}</div>
);

function Taskbar() {
  return (
    <footer className="flex h-[39px] shrink-0 items-start border-t border-[#4d5257] bg-[#070b11] font-['Open_Sans','Noto_Sans',sans-serif] text-white">
      <div className="flex w-[119px] items-center">
        <svg className="ml-[5px] shrink-0" width="38" height="38" viewBox="0 0 38 38">
          <defs><radialGradient id="orb" cy=".9"><stop offset="0" stopColor="#57c7f2" /><stop offset=".6" stopColor="#22659b" /><stop offset="1" stopColor="#517a98" /></radialGradient></defs>
          <circle cx="19" cy="19" r="18" fill="url(#orb)" stroke="#233f55" />
          <path d="M3 15a16.500 16.500 0 0 1 32 0Q20 20 3 15z" fill="#b5cfdf" opacity=".55" />
          <path d="M11 11q5-3 8 0l-1.500 7q-4-2.500-8 0z" fill="#e8632c" /><path d="M20 11.500q4 2.500 9-.5l-2 7.500q-4 2.500-8 0z" fill="#9bc844" />
          <path d="M9 19.500q4-2.500 8.500 0L16 27q-4-2.500-8.500 0z" fill="#4aa0e0" /><path d="M18.500 20.500q4 2.500 8 0L25 28q-4 2.500-8 0z" fill="#fbcb3c" />
        </svg>
        <svg className="ml-[27px] shrink-0" width="34" height="36" viewBox="0 0 34 36">
          <path d="M27 24A9.500 9.500 0 1 1 27.500 18.500H9" fill="none" stroke="#3fb2ec" strokeWidth="6.500" />
          <path d="M26 24.500A9.500 9.500 0 0 1 9 20" fill="none" stroke="#9be3fb" strokeWidth="2" />
          <path d="M30 10c1-6-3-8-8-5C12 9 3 20 1.500 29c0 5 4 4 7 2" fill="none" stroke="#f5c52c" strokeWidth="2.600" />
        </svg>
      </div>
      <Glass w="w-[53px]">
        <svg width="34" height="32" viewBox="0 0 34 32"><path d="M2 4h10l2 3h17v22H2z" fill="#e3c56b" /><path d="M4 1h6v6H4z" fill="#4fa04b" /><path d="M13 4h9v8h-9z" fill="#fff" /><path d="M22 5h7v5h-7z" fill="#d9b98a" /><path d="M1 9h30l2 21H1z" fill="#f7e4a0" /><path d="M6 31V22q0-3 3-3h15q3 0 3 3v9h-4v-5H10v5z" fill="#8fd0f1" stroke="#5aa6d2" /></svg>
      </Glass>
      <div className="h-[38px] w-[4px] rounded-r border-r border-[#7d8287] bg-[#24292e]" />
      <svg className="ml-[20px] mt-[7px] shrink-0" width="26" height="26"><path d="M5 0h21v22H5z" fill="#5ea3d0" /><path d="M2 2h21v23H2z" fill="#8cc3e4" stroke="#3f86b4" /><ellipse cx="11" cy="12.500" rx="8.500" ry="9.500" fill="#f1802c" stroke="#fff" strokeWidth=".8" /><path d="M8 7v11l8-5.500z" fill="#fff" /></svg>
      <svg className="ml-[34px] mt-[6px] shrink-0" width="33" height="28"><path d="M0 1l18 13L0 27z" fill="#7059ad" /><path d="M0 1l18 13L10 20z" fill="#9c8acc" /><path d="M33 0v28L15 14z" fill="#d9d3e8" /><path d="M33 0v12L15 14z" fill="#b8accf" /></svg>
      <svg className="ml-[30px] mt-[4px] shrink-0" width="31" height="31"><circle cx="15.500" cy="15.500" r="14" fill="#2b6fb8" /><path d="M14 2q8-2 13 6l-5 2-6-3z" fill="#5ab2e6" /><path d="M3 6q1 3 4 2 3-4 5-2-2 4 3 5 0 3-4 4 1 5 7 4 6-1 7-8 2 6-1 9 5-5 3-14 6 8 2 16-6 8-15 7Q0 27 1 14 1 9 3 6z" fill="#ec6a1d" /><path d="M27 8q6 10-3 18-6 5-13 3 12-2 15-10 2-5 1-11z" fill="#fcb92a" /></svg>
      <div className="ml-[17px] flex gap-[5px]">
        <Glass w="w-[57px]">
          <svg width="30" height="30" viewBox="-15 -15 30 30"><circle r="14.500" fill="#fbc92f" /><path d="M-12.560-7.250A14.500 14.500 0 0 1 12.560-7.250H0L-6 3z" fill="#dd4b3e" /><path d="M-12.560-7.250L-5.800 3.500 0 7-3 14.200A14.500 14.500 0 0 1-12.560-7.250z" fill="#33a356" /><path d="M12.560-7.250A14.500 14.500 0 0 1-3 14.200L5.800 3.300 3-7.250z" fill="#fbc92f" /><circle r="6.700" fill="#fff" /><circle r="5.300" fill="#4a87ee" /></svg>
        </Glass>
        <Glass w="w-[57px]">
          <svg width="32" height="34" viewBox="0 0 32 34"><path d="M9 1q4 0 6 1 13 0 13 14 2 4 1 8-3 8-11 6Q3 32 3 16-1 3 9 1z" fill="#19ace8" /><text x="8" y="25" fontFamily="Liberation Sans" fontWeight="bold" fontSize="25" fill="#fff">S</text><circle cx="25" cy="27" r="6" fill="#f4ad24" stroke="#8a5a08" /><text x="22.300" y="30.500" fontFamily="Liberation Sans" fontSize="9.500" fill="#111">3</text></svg>
        </Glass>
        <Glass w="w-[57px]">
          <svg width="32" height="30"><path d="M1 3L9 0l22 3-2 22-8 4L1 25z" fill="#f0a68d" /><path d="M9 3l21 2-2 21-19-1z" fill="#f8d3c6" /><path d="M5 8h20v18H5z" fill="#d14e22" stroke="#fff" /><path d="M8 12h6v2H8zM8 16h5v2H8zM8 20h6v2H8z" fill="#fff" /><path d="M18.500 12.500a4.500 4.500 0 1 0 4.500 4.500h-4.500z" fill="#fff" /><path d="M20 11.500v4h4q-.5-3.500-4-4z" fill="#fff" /></svg>
        </Glass>
        <Glass w="w-[57px]">
          <svg width="32" height="32"><path d="M1 8L17 1l14 7-2 20-9 3L3 30z" fill="#12a9d6" /><path d="M14 2l12-1 5 5-7 6z" fill="#e3ef3f" /><path d="M20 4l11 6-3 19-8-4z" fill="#14c3c9" /><path d="M5 6h20v20H5z" fill="#050505" /><text x="6" y="16" fontFamily="Liberation Sans" fontWeight="bold" fontSize="10.500" fill="#fff">WS</text><path d="M7 22h7v1.500H7z" fill="#fff" /></svg>
        </Glass>
      </div>
      <div className="ml-auto flex h-[38px] items-center">
        <svg width="8" height="5" fill="#fff"><path d="M0 4.500h8L4 0z" /></svg>
        <svg className="ml-[13px]" width="16" height="16"><path d="M1.500 1v14" stroke="#ddd" strokeWidth="1.200" /><path d="M3 2h5l1 1h5v6H3z" fill="#fff" /><circle cx="10.500" cy="10.500" r="4.700" fill="#d92b2b" /><path d="M8.500 8.500l4 4M12.500 8.500l-4 4" stroke="#fff" strokeWidth="1.500" /></svg>
        <svg className="ml-[11px]" width="10" height="14"><rect x="1" y="2" width="8" height="11" rx="1" fill="none" stroke="#fff" strokeWidth="1.300" /><path d="M3 4h4v7H3zM3 0h4v2H3z" fill="#fff" /></svg>
        <svg className="ml-[12px]" width="14" height="12" fill="#fff"><path d="M0 9h2v2H0zM3 8h2v3H3zM6 6h2v5H6zM9 3h2v8H9z" /><path d="M12 0h2v11h-2z" fill="#666" /></svg>
        <svg className="ml-[10px]" width="15" height="14" fill="none" stroke="#fff"><path d="M0 4.500h2.500L6 1v12L2.500 9.500H0z" fill="#fff" stroke="none" /><path d="M8 4.500q2 2.500 0 5M10 3q3.500 4 0 8M12 1.500q5 5.500 0 11" /></svg>
        <div className="ml-[18px] flex w-[56px] flex-col items-center text-[11.3px] leading-[17px]"><span>10:45 PM</span><span>01-Feb-17</span></div>
        <div className="ml-[13px] h-[38px] w-[13px] border border-[#6a6f73] bg-linear-to-b from-[#5d6266] via-[#1a1e22] via-40% to-[#2f3439]" />
      </div>
    </footer>
  );
}

export default function App() {
  return (
    <div className="flex h-[736px] w-[1362px] flex-col overflow-hidden bg-white">
      <BrowserChrome />
      <div className="shrink-0 font-['Lato',sans-serif]"><AppToolbar /></div>
      <div className="flex h-[586px] shrink-0 overflow-hidden">
        <Library />
        <div className="w-[5px] shrink-0 border-l border-[#e3ddd4] bg-[#f6f3ee]" />
        <Canvas />
        <TabRail />
        <Properties />
      </div>
      <Taskbar />
    </div>
  );
}
